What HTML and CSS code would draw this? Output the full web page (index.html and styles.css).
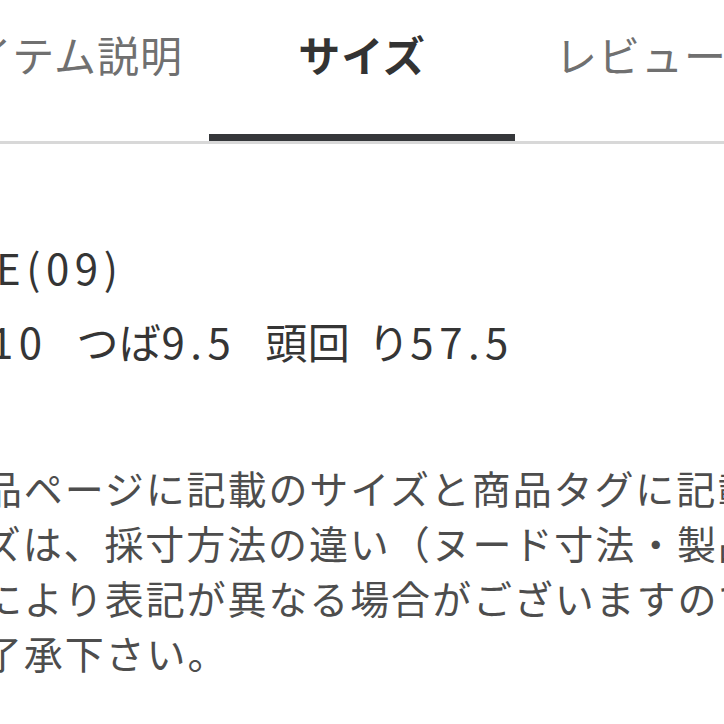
FILE: index.html
```html
<!DOCTYPE html>
<html lang="ja">
<head>
<meta charset="utf-8">
<link rel="stylesheet" href="styles.css">
</head>
<body>
<div class="page">
  <nav class="tabs">
    <div class="tab">アイテム説明</div>
    <div class="tab tab-active">サイズ</div>
    <div class="tab tab-last">レビュー</div>
  </nav>
  <section class="size">
    <p class="spec"><span class="num">FREE(09)</span></p>
    <p class="spec">深さ<span class="num">10 </span>つば<span class="num">9.5 </span>頭<span class="loose">回</span>り<span class="num">57.5</span></p>
  </section>
  <p class="note">商品ページに記載のサイズと商品タグに記載のサ<br>イズは、採寸方法の違い（ヌード寸法・製品寸法<br>）により表記が異なる場合がございますので、<br>ご了承下さい。</p>
</div>
</body>
</html>
```
FILE: styles.css
```css
html, body {
  margin: 0;
  padding: 0;
  background: #ffffff;
}
body {
  width: 724px;
  height: 724px;
  overflow: hidden;
  font-family: "Noto Sans CJK JP", "Noto Sans", sans-serif;
}
.page {
  width: 1100px;
}
.tabs {
  display: flex;
  margin-left: -97px;
  width: 1100px;
  border-bottom: 3px solid #d8d8d8;
}
.tab {
  width: 306px;
  flex: none;
  box-sizing: border-box;
  height: 141px;
  padding-top: 24px;
  line-height: 60px;
  font-size: 42px;
  letter-spacing: 1px;
  text-align: center;
  color: #707070;
  border-bottom: 7px solid transparent;
}
.tab-active {
  color: #333333;
  font-weight: 700;
  border-bottom-color: #35373a;
}
.tab-last {
  text-align: left;
  padding-left: 40px;
}
.size {
  margin: 85px 0 0 -95px;
}
.spec {
  margin: 0;
  font-size: 42px;
  line-height: 76px;
  letter-spacing: 0.5px;
  word-spacing: 14px;
  color: #353535;
  white-space: nowrap;
}
.spec + .spec {
  margin-top: -2px;
}
.num {
  letter-spacing: 5.5px;
}
.loose {
  letter-spacing: 18px;
}
.note {
  margin: 81px 0 0 -58px;
  font-size: 39px;
  line-height: 55px;
  letter-spacing: 1.9px;
  color: #4d4d4d;
  white-space: nowrap;
}
```
